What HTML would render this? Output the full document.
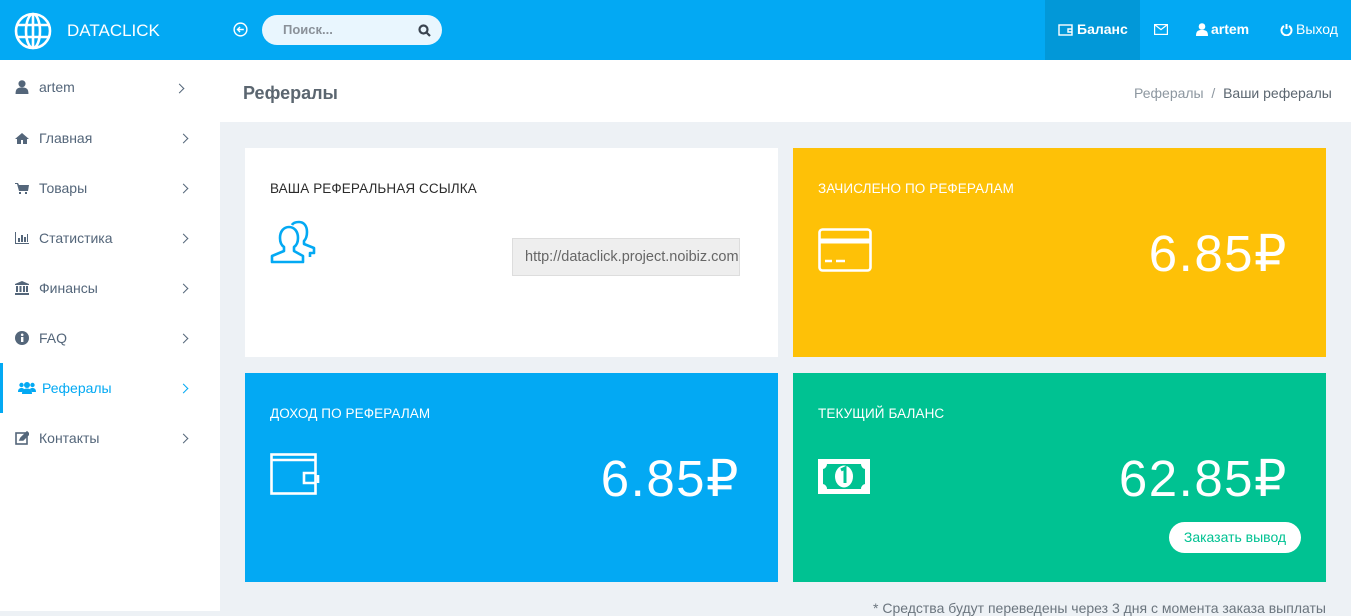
<!DOCTYPE html><html><head><meta charset="utf-8"><style>
*{margin:0;padding:0;box-sizing:border-box}
body{width:1351px;height:611px;overflow:hidden;background:#edf1f5;font-family:"Liberation Sans",sans-serif;position:relative}
.hdr{position:absolute;left:0;top:0;width:1351px;height:60px;background:#03a9f3;color:#fff}
.abs{position:absolute}
.side{position:absolute;left:0;top:60px;width:220px;height:551px;background:#fff}
.side .it{position:absolute;left:0;width:220px;height:50px;color:#54667a;font-size:14px}
.side .it span.t{position:absolute;left:39px;top:0;line-height:50px}
.side .it .ar{position:absolute;left:180px;top:22px;width:7px;height:7px;border-right:1.5px solid #54667a;border-top:1.5px solid #54667a;transform:rotate(45deg)}
.side .ic{position:absolute;left:15px;top:18px;width:14px;height:14px}
.card{position:absolute;width:533px;height:209px;color:#fff}
.card .h{position:absolute;left:25px;top:33px;font-size:13.5px;letter-spacing:.1px}
.card .v{position:absolute;right:38px;top:76px;font-size:51px;font-weight:300;letter-spacing:1.5px}
</style></head><body>
<div class="hdr">
<svg class="abs" style="left:14px;top:12px" width="38" height="38" viewBox="0 0 38 38" fill="none" stroke="#fff" stroke-width="2.6"><circle cx="19" cy="19" r="17"/><ellipse cx="19" cy="19" rx="7" ry="17"/><line x1="19" y1="2" x2="19" y2="36"/><line x1="3" y1="13" x2="35" y2="13"/><line x1="3" y1="25" x2="35" y2="25"/></svg>
<div class="abs" style="left:67px;top:21px;font-size:17px">DATACLICK</div>
<svg class="abs" style="left:233px;top:22px" width="15" height="15" viewBox="0 0 16 16" fill="none" stroke="#fff" stroke-width="1.5"><circle cx="8" cy="8" r="6.8"/><path d="M11.5 8H5M7.5 5.3L4.8 8l2.7 2.7"/></svg>
<div class="abs" style="left:262px;top:15px;width:180px;height:30px;border-radius:15px;background:#e9f6fe"></div>
<div class="abs" style="left:283px;top:22px;font-size:13px;color:#8a9199;font-weight:bold">Поиск...</div>
<svg class="abs" style="left:418px;top:24px" width="13" height="13" viewBox="0 0 13 13" fill="none" stroke="#3a4450" stroke-width="2.2"><circle cx="5.5" cy="5.5" r="4"/><path d="M8.5 8.5l3.5 3.5"/></svg>
<div class="abs" style="left:1045px;top:0;width:95px;height:60px;background:#0298d8"></div>
<svg class="abs" style="left:1058px;top:24px" width="15" height="12" viewBox="0 0 15 12" fill="none" stroke="#fff" stroke-width="1.4"><rect x="1" y="1" width="13" height="10"/><path d="M14 5h-4v3h4"/></svg>
<div class="abs" style="left:1077px;top:21px;font-size:14px;font-weight:bold">Баланс</div>
<svg class="abs" style="left:1154px;top:24px" width="14" height="11" viewBox="0 0 14 11" fill="none" stroke="#fff" stroke-width="1.2"><rect x=".6" y=".6" width="12.8" height="9.8"/><path d="M.6 .6l6.4 5 6.4-5"/></svg>
<svg class="abs" style="left:1196px;top:23px" width="12" height="13" viewBox="0 0 12 13" fill="#fff"><circle cx="6" cy="3.5" r="3.3"/><path d="M0 13c0-5 2-6 6-6s6 1 6 6z"/></svg>
<div class="abs" style="left:1211px;top:21px;font-size:14px;font-weight:bold">artem</div>
<svg class="abs" style="left:1280px;top:23px" width="13" height="13" viewBox="0 0 13 13" fill="none" stroke="#fff" stroke-width="2"><path d="M4 3a5 5 0 1 0 5 0M6.5 1v5"/></svg>
<div class="abs" style="left:1296px;top:21px;font-size:14px">Выход</div>
</div>
<div class="side">
<div class="it" style="top:2px"><svg class="ic" viewBox="0 0 12 13" fill="#54667a"><circle cx="6" cy="3.5" r="3.3"/><path d="M0 13c0-5 2-6 6-6s6 1 6 6z"/></svg><span class="t">artem</span><div class="ar" style="left:176px;top:23px"></div></div>
<div class="it" style="top:53px"><svg class="ic" viewBox="0 0 14 14" fill="#54667a"><path d="M7 2L0 8h2v5h4V9h2v4h4V8h2z"/></svg><span class="t">Главная</span><div class="ar"></div></div>
<div class="it" style="top:103px"><svg class="ic" viewBox="0 0 14 14" fill="#54667a"><path d="M0 2h3l1 2h10l-1 6H4L2 3H0zM4 11h2v2H4zM10 11h2v2h-2z"/></svg><span class="t">Товары</span><div class="ar"></div></div>
<div class="it" style="top:153px"><svg class="ic" viewBox="0 0 14 14" fill="#54667a"><path d="M0 1h1v11h13v1H0zM3 7h2v4H3zM6 4h2v7H6zM9 6h2v5H9zM12 3h1v8h-1z"/></svg><span class="t">Статистика</span><div class="ar"></div></div>
<div class="it" style="top:203px"><svg class="ic" viewBox="0 0 14 14" fill="#54667a"><path d="M7 0l7 3v1H0V3zM1 5h2v6H1zM4.5 5h2v6h-2zM8 5h2v6H8zM11 5h2v6h-2zM0 12h14v2H0z"/></svg><span class="t">Финансы</span><div class="ar"></div></div>
<div class="it" style="top:253px"><svg class="ic" viewBox="0 0 14 14"><circle cx="7" cy="7" r="7" fill="#54667a"/><rect x="6" y="6" width="2.4" height="5" fill="#fff"/><circle cx="7.2" cy="3.8" r="1.3" fill="#fff"/></svg><span class="t">FAQ</span><div class="ar"></div></div>
<div class="it" style="top:303px;color:#03a9f3"><div class="abs" style="left:0;top:0;width:3px;height:50px;background:#03a9f3"></div><svg class="ic" style="left:18px;width:18px" viewBox="0 0 18 14" fill="#03a9f3"><circle cx="9" cy="4" r="3"/><circle cx="3.5" cy="4" r="2.2"/><circle cx="14.5" cy="4" r="2.2"/><path d="M4 13c0-4 2-5.5 5-5.5s5 1.5 5 5.5zM0 11c0-3 1.5-4 3.5-4S6 8 6 8L4 11zM18 11c0-3-1.5-4-3.5-4S12 8 12 8l2 3z"/></svg><span class="t" style="left:42px">Рефералы</span><div class="ar" style="border-color:#03a9f3"></div></div>
<div class="it" style="top:353px"><svg class="ic" viewBox="0 0 14 14" fill="none" stroke="#54667a" stroke-width="1.6"><rect x="1" y="2" width="11" height="11"/><path d="M5 9l1-2 6-6 2 2-6 6z" fill="#54667a"/></svg><span class="t">Контакты</span><div class="ar"></div></div>
</div>
<div class="abs" style="left:220px;top:60px;width:1131px;height:62px;background:#fff"></div>
<div class="abs" style="left:243px;top:83px;font-size:18px;font-weight:bold;color:#5b6670">Рефералы</div>
<div class="abs" style="left:1134px;top:85px;font-size:14px;color:#8d97a0">Рефералы &nbsp;/&nbsp; <span style="color:#5b6670">Ваши рефералы</span></div>

<div class="card" style="left:245px;top:148px;background:#fff;color:#2b2b2b">
<div class="h">ВАША РЕФЕРАЛЬНАЯ ССЫЛКА</div>
<svg class="abs" style="left:25px;top:72px" width="50" height="45" viewBox="0 0 50 45" fill="none" stroke="#03a9f3" stroke-width="2.6" stroke-linejoin="round"><path d="M2 42v-6l12-5v-4c-3-2-4-5-4-9 0-7 4-11 9-11s9 4 9 11c0 4-1 7-4 9v4l9 5v6z"/><path d="M22 5c1-2 4-3 7-3 5 0 8 4 8 10 0 4-1 7-3 9v3l10 4v5h-4v4"/></svg>
<div class="abs" style="left:267px;top:90px;width:228px;height:38px;background:#eeeeee;border:1px solid #ddd;color:#666;font-size:14.5px;line-height:36px;padding-left:12px;overflow:hidden;white-space:nowrap">http://dataclick.project.noibiz.com</div>
</div>
<div class="card" style="left:793px;top:148px;background:#fec107">
<div class="h">ЗАЧИСЛЕНО ПО РЕФЕРАЛАМ</div>
<svg class="abs" style="left:25px;top:80px" width="54" height="44" viewBox="0 0 54 44" fill="none" stroke="#fff" stroke-width="2.6"><rect x="1.5" y="1.5" width="51" height="41" rx="3"/><path d="M1.5 13h51" stroke-width="5"/><path d="M7 33h7M18 33h9"/></svg>
<div class="v">6.85₽</div>
</div>
<div class="card" style="left:245px;top:373px;background:#03a9f3">
<div class="h">ДОХОД ПО РЕФЕРАЛАМ</div>
<svg class="abs" style="left:25px;top:80px" width="50" height="42" viewBox="0 0 50 42" fill="none" stroke="#fff" stroke-width="2.6"><rect x="1.5" y="1.5" width="44" height="39"/><path d="M1.5 7h44M46 20H34v10h12"/><path d="M48 22v8"/></svg>
<div class="v">6.85₽</div>
</div>
<div class="card" style="left:793px;top:373px;background:#00c292">
<div class="h">ТЕКУЩИЙ БАЛАНС</div>
<svg class="abs" style="left:25px;top:86px" width="52" height="35" viewBox="0 0 52 35"><rect width="52" height="35" fill="#fff"/><path d="M5 10a5 5 0 0 0 4-5h34a5 5 0 0 0 4 5v15a5 5 0 0 0-4 5H9a5 5 0 0 0-4-5z" fill="#00c292"/><ellipse cx="26" cy="17.5" rx="9" ry="11" fill="#fff"/><path d="M23 11l4-2v15" stroke="#00c292" stroke-width="3" fill="none"/></svg>
<div class="v">62.85₽</div>
<div class="abs" style="left:376px;top:149px;width:132px;height:31px;border-radius:16px;background:#fff;color:#00c292;font-size:14px;line-height:31px;text-align:center">Заказать вывод</div>
</div>
<div class="abs" style="left:873px;top:600px;font-size:14px;color:#6b757e">* Средства будут переведены через 3 дня с момента заказа выплаты</div>
</body></html>
